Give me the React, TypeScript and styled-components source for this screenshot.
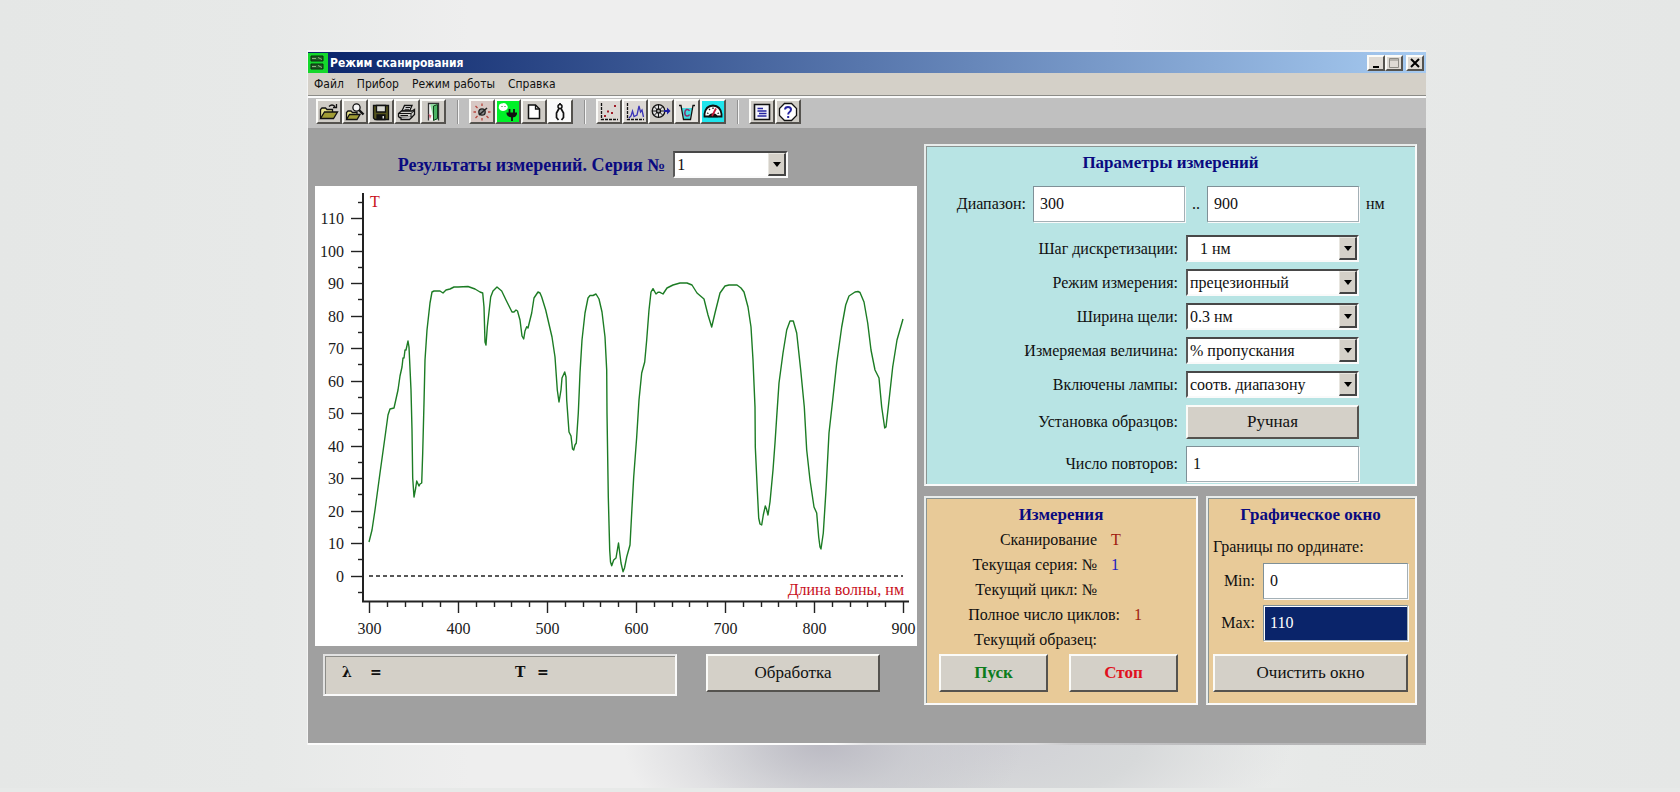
import React from "react";
import styled, { createGlobalStyle, css } from "styled-components";

const GlobalStyle = createGlobalStyle`
  * { box-sizing: border-box; }
  body {
    margin: 0;
    background: #e7e9e8;
    font-family: "Liberation Serif", serif;
    font-size: 16px;
    line-height: 20px;
    color: #101010;
  }
  button, input, select { font: inherit; color: inherit; border-radius: 0; }
`;

const Page = styled.div`
  min-height: 100vh;
  padding: 50px 254px 43px 307px;
  border-bottom: 4px solid #e7e9e8;
  background:
    radial-gradient(ellipse 200px 110px at 49% calc(100% - 46px), #bbbac3 0%, rgba(196, 196, 203, 0.6) 45%, rgba(220, 221, 223, 0) 100%),
    radial-gradient(ellipse 300px 120px at 59% calc(100% - 46px), #d0d0d5 0%, #d7d9da 50%, rgba(224, 226, 226, 0) 100%),
    linear-gradient(90deg, #e5e7e6 0%, #e7e9e8 16%, #eeeeee 28%, #eeeeee 66%, #e7e9e8 78%, #e5e7e6 100%);
`;

const AppWindow = styled.main`
  min-width: 1118px;
  border: solid #f4f4f4;
  border-width: 2px 0 0 1px;
  background: #a0a0a0;
`;

const WindowEdge = styled.div`
  height: 2px;
  background: linear-gradient(90deg, #fcfcfc 47%, #e2e2e4 50%, #dcdcde 65%, #cacacc 68%, #b8b8ba 83%, #b4b4b4 100%);
`;

const TitleBar = styled.header`
  display: flex;
  align-items: center;
  height: 21px;
  padding-right: 2px;
  gap: 2px;
  background: linear-gradient(90deg, #0a246a, #a6caf0);
`;

const Title = styled.h1`
  flex: 1;
  margin: 0;
  font: bold 12px/20px "DejaVu Sans Condensed", "DejaVu Sans", sans-serif;
  color: #fff;
`;

const WindowButtons = styled.div<{ $apart?: boolean }>`
  display: flex;
  margin-left: ${(p) => (p.$apart ? 1 : 0)}px;
`;

const raised = css`
  background: #d4d0c8;
  border: 2px solid;
  border-color: #fbfbf8 #55534f #55534f #fbfbf8;
`;

const CaptionButton = styled.button`
  ${raised}
  width: 18px;
  height: 16px;
  padding: 0;
  display: grid;
  place-items: center;
  background: #dedad4;
`;

const MenuBar = styled.nav`
  display: flex;
  gap: 13px;
  height: 25px;
  padding: 1px 6px 0;
  background: #d4d0c8;
  border-bottom: 2px solid #fafafa;
  box-shadow: inset 0 -1px #8c8c88;
`;

const MenuLink = styled.a`
  font: 12px/20px "DejaVu Sans Condensed", "DejaVu Sans", sans-serif;
  color: #111;
  text-decoration: none;
`;

const Toolbar = styled.div`
  display: flex;
  align-items: center;
  height: 30px;
  padding: 0 8px 3px;
  background: #c0c0c0;
`;

const ToolGroup = styled.div`
  display: flex;
`;

const Separator = styled.span`
  width: 2px;
  height: 24px;
  margin: 0 10px 0 11px;
  background: linear-gradient(90deg, #929292 50%, #f4f4f4 50%);
`;

const ToolButton = styled.button<{ $tint?: string }>`
  ${raised}
  width: 26px;
  height: 25px;
  padding: 0;
  display: grid;
  place-items: center;
  background: ${(p) => p.$tint ?? "#cfccc6"};
  svg { display: block; }
`;

const Workspace = styled.div`
  display: flex;
  gap: 7px;
  padding: 16px 9px 38px 7px;
`;

const ResultsColumn = styled.section`
  flex: 1;
  min-width: 0;
`;

const SidePanels = styled.section`
  width: 493px;
  flex: none;
  display: flex;
  flex-direction: column;
  gap: 10px;
`;

const Heading = styled.h2`
  margin: 0;
  font-size: 17px;
  line-height: 20px;
  font-weight: bold;
  text-align: center;
  color: #0a0a80;
`;

const SeriesRow = styled.div`
  display: flex;
  justify-content: center;
  align-items: center;
  gap: 8px;
  height: 27px;
  margin: 7px 46px 8px 0;
`;

const SeriesLabel = styled.label`
  font-size: 18px;
  font-weight: bold;
  color: #0a0a80;
`;

const SelectBox = styled.span<{ $width: number }>`
  position: relative;
  display: block;
  width: ${(p) => p.$width}px;
  height: 27px;
  border: 2px solid;
  border-color: #484848 #fafafa #fafafa #585858;
  background: #fff;
`;

const NativeSelect = styled.select<{ $indent?: boolean }>`
  appearance: none;
  display: block;
  width: 100%;
  height: 23px;
  border: 0;
  outline: 0;
  padding: 0 20px 0 ${(p) => (p.$indent ? 12 : 2)}px;
  background: transparent;
`;

const ArrowBox = styled.span`
  position: absolute;
  top: 0;
  right: 0;
  width: 18px;
  height: 23px;
  display: grid;
  place-items: center;
  border: solid;
  border-width: 1px 2px 2px 1px;
  border-color: #e8e6e0 #444 #444 #e8e6e0;
  background: #d4d0c8;
  pointer-events: none;
  &::after {
    content: "";
    border: solid transparent;
    border-width: 5px 4px 0;
    border-top-color: #000;
  }
`;

const TextInput = styled.input<{ $selected?: boolean }>`
  width: 100%;
  min-width: 0;
  height: 36px;
  padding: 0 6px;
  border: 1px solid;
  border-color: #7f9097 #a4b0b6 #a4b0b6 #7f9097;
  outline: 0;
  background: ${(p) => (p.$selected ? "#0a246a" : "#fff")};
  color: ${(p) => (p.$selected ? "#fff" : "#101010")};
  box-shadow: ${(p) => (p.$selected ? "inset 1px 1px #fff, " : "")}1px 1px #fafafa;
`;

const ChartSheet = styled.figure`
  margin: 0;
  background: #fff;
  svg { display: block; width: 100%; height: auto; }
`;

const PushButton = styled.button<{ $tone?: string; $width?: number; $low?: boolean }>`
  ${raised}
  width: ${(p) => (p.$width ? p.$width + "px" : "100%")};
  height: ${(p) => (p.$low ? 34 : 38)}px;
  padding: 0;
  color: ${(p) => p.$tone ?? "#101010"};
  font-weight: ${(p) => (p.$tone ? "bold" : "normal")};
  font-size: 17px;
`;

const BottomRow = styled.div`
  display: flex;
  align-items: flex-start;
  gap: 29px;
  padding: 8px 37px 0 8px;
`;

const Readout = styled.output`
  flex: 1;
  height: 42px;
  display: grid;
  grid-template-columns: 28px 145px 22px 1fr;
  align-items: start;
  padding: 6px 17px;
  border: 2px solid;
  border-color: #e2e2e2 #fafafa #fafafa #e2e2e2;
  background: #d4d0c8;
  box-shadow: inset 1px 1px #8c8c88;
  font: bold 14px/20px "DejaVu Serif", "Liberation Serif", serif;
`;

const Panel = styled.section<{ $fill: string }>`
  border: 2px solid;
  border-color: #e8eceb #fafafa #fafafa #e8eceb;
  box-shadow: inset 1px 1px #8a9492;
  background: ${(p) => p.$fill};
`;

const ParametersPanel = styled(Panel)`
  height: 342px;
  padding: 7px;
`;

const RangeRow = styled.div`
  display: grid;
  grid-template-columns: 100px 152px 22px 152px 1fr;
  align-items: center;
  margin-top: 13px;
  > label { text-align: right; padding-right: 7px; }
  > span { padding-left: 7px; }
`;

const Fields = styled.div`
  display: grid;
  grid-template-columns: 245px 173px;
  align-items: center;
  row-gap: 7px;
  column-gap: 8px;
  margin-top: 13px;
  > label { text-align: right; }
`;

const LowerPanels = styled.div`
  display: grid;
  grid-template-columns: 274px 1fr;
  gap: 8px;
`;

const TaskPanel = styled(Panel)`
  height: 209px;
  padding: 7px;
  display: flex;
  flex-direction: column;
`;

const StatusList = styled.dl`
  margin: 2px 0 0;
`;

const StatusRow = styled.div<{ $wide?: boolean }>`
  display: grid;
  grid-template-columns: ${(p) => (p.$wide ? 187 : 164)}px 1fr;
  column-gap: 14px;
  line-height: 25px;
  dt { text-align: right; white-space: nowrap; }
  dd { margin: 0; }
`;

const Value = styled.dd<{ $color: string }>`
  color: ${(p) => p.$color};
`;

const ButtonRow = styled.div`
  display: flex;
  gap: 21px;
  padding: 0 6px;
  margin-top: auto;
  margin-bottom: 4px;
`;

const LimitNote = styled.p`
  margin: 12px 0 6px;
`;

const LimitRow = styled.div`
  display: grid;
  grid-template-columns: 42px 1fr;
  column-gap: 8px;
  align-items: center;
  margin-bottom: 6px;
  label { text-align: right; }
`;

const LimitPanel = styled(TaskPanel)`
  padding: 7px 7px 7px 5px;
`;

const ClearRow = styled(ButtonRow)`
  padding: 0;
`;

/* Transmission spectrum, traced in the sheet's own units */
const SPECTRUM = `369,542 372,530 375,510 380,473 385,437 388,415 390,409 394,408 398,390 400,376 402,367 403,358 404,358 405,350 406,350 408,341 409,347 411,390 412,430
412.7,478 414,497 415.7,488 416.7,481 419,486 420,484 421.7,483 422.7,453 424,403 425,360 427,330 430,303 432,292 434,291 440,291 443,293 446,290 450,289 454,287 458,287 468,286.5 475,289 480,292 482.7,293
484,307 485,342 486,345 487.3,327 490.7,297 493,291 497,287 501.7,291 506,300 512,312 514,312 516,310 517.5,311 520,320 522,336 523.7,339 525,331 526.7,326.7 528,328 531.7,313 534,298 538,292
540,293 541.7,297 545.7,310 552,337 555,357 557.3,390 559,402 561,390 562,378 564.7,372 566,377 566.7,400 569,432 571,436 572.5,449 573.7,450 575,445 576.3,443 578.3,413 579.3,390 580,373 582,340 585,313
588,298 590,295.5 593,295.5 596,294 599,299 602,312 605,337 606.7,370 607,413 608.3,497 609.7,550 610.5,562 611.7,565.7 613.7,560 616,558 618.5,543 621,563 623,571.7 624.5,568 626.7,557 630,545 631.7,513 633.7,477 636.7,437
639,400 641.7,373 644.7,362 646.7,340 649,310 651,292 653,288.7 656,294 658,292.3 660,292.3 663,294 667,288 673,285 680,283 687,283 692,285 697,293 704,299 708,315 711.7,327 715,313 720,293 725,286 729,285
737,285 741,288 744,292 748,307 751,327 753,360 755,407 755.3,447 757.3,490 758.7,518 760,524 761.7,525 763.3,515 765.3,506 766.5,509 768,515 770,502 773,470 775,443 776.7,417 779,383 783,353 786.7,330 790,321 793.3,321
796.7,333 800.7,370 804.3,407 806.7,450 810,480 814,507 816.7,513 818.7,537 820,547 821,549 823.3,533 826,490 829,433 832.7,400 836.7,363 841.7,327 845.7,305 849,296 855,292 858,291.5 860,292.5 864,302 867.7,323 871,350 875,370
879,378 881.7,407 884.7,428 886,427 888.3,407 892.7,367 897,340 903,319`;

const yOf = (t: number) => Math.floor(576 - t * 3.248) + 0.5;
const xOf = (nm: number) => Math.round(369 + (nm - 300) * 0.89) + 0.5;
const percents = Array.from({ length: 12 }, (_, i) => i * 10);
const halfPercents = Array.from({ length: 13 }, (_, i) => i * 10 - 5);
const wavelengths = Array.from({ length: 31 }, (_, i) => 300 + i * 20);

function SpectrumChart() {
  return (
    <svg viewBox="315 186 602 460" role="img" aria-label="Спектр пропускания" fontFamily="'Liberation Serif', serif" fontSize="16">
      <g stroke="#222" strokeWidth="2" fill="none">
        <path d="M363 193V602" />
        <path d="M362 601.5H909" />
      </g>
      <g stroke="#222" strokeWidth="1.4">
        {percents.map((t) => <path key={t} d={`M351 ${yOf(t)}H363`} />)}
        {halfPercents.map((t) => <path key={t} d={`M358 ${yOf(t)}H363`} />)}
        {wavelengths.map((w) => <path key={w} d={`M${xOf(w)} 602V${w % 100 === 0 ? 613 : 607}`} />)}
      </g>
      <path d="M369 576H903" stroke="#222" strokeWidth="1.4" strokeDasharray="4 3" />
      <g fill="#1a1a1a" textAnchor="end">
        {percents.map((t) => <text key={t} x="344" y={yOf(t) + 5}>{t}</text>)}
      </g>
      <g fill="#1a1a1a" textAnchor="middle">
        {[300, 400, 500, 600, 700, 800, 900].map((w) => <text key={w} x={xOf(w)} y="634">{w}</text>)}
      </g>
      <text x="370" y="207" fill="#c8101c">T</text>
      <text x="904" y="595" fill="#c8101c" textAnchor="end">Длина волны, нм</text>
      <polyline points={SPECTRUM} fill="none" stroke="#1c7c24" strokeWidth="1.4" strokeLinejoin="round" />
    </svg>
  );
}

const Glyph = ({ children, size = 20 }: { children: React.ReactNode; size?: number }) => (
  <svg width={size} height={size} viewBox="0 0 20 20" fill="none" stroke="#111" strokeWidth="1.3" aria-hidden="true">{children}</svg>
);

const OpenGlyph = () => (
  <Glyph>
    <path d="M1.5 16V7.5L3 6H6.5L8 7.5H13.5V10" fill="#e8e48c" />
    <path d="M1.5 16.5L5.5 10H18.5L14.5 16.5Z" fill="#a09c34" />
    <path d="M10 4.5Q13 1.5 16 4.5M17.5 2V5.5H14" />
  </Glyph>
);
const BrowseGlyph = () => (
  <Glyph>
    <path d="M1.5 17V10.5L3 9H6L7.5 10.5H12V12" fill="#e8e48c" />
    <path d="M1.5 17.5L4.5 12.5H15L12 17.5Z" fill="#a09c34" />
    <circle cx="11.5" cy="5.5" r="3.6" fill="#f4f4f4" />
    <path d="M14 8L18.5 12.5" strokeWidth="2.4" />
  </Glyph>
);
const SaveGlyph = () => (
  <Glyph>
    <path d="M2.5 3.5H17.5V17.5H4L2.5 16Z" fill="#55531c" />
    <path d="M5.5 3.5H14.5V10H5.5Z" fill="#d8d8d2" />
    <path d="M6 13H14V17.5H6Z" fill="#111" />
    <path d="M11.5 14H13V16.5H11.5Z" fill="#ddd" stroke="none" />
  </Glyph>
);
const PrintGlyph = () => (
  <Glyph>
    <path d="M5 9L7.500 3.500H15L12.500 9Z" fill="#f4f4f4" />
    <path d="M8.500 5.500H13M7.500 7.300H12" strokeWidth="1" />
    <path d="M1.500 11.500L4.500 9H15L17.500 7.500V12.500L14.500 15.500H2.500L1.500 14.500Z" fill="#d0d0cc" />
    <path d="M1.500 11.500H14L17.500 8.500M14 11.500V15.500M3.500 13.500H11" strokeWidth="1" />
    <path d="M4 15.500V17.500H12.500L15 15" fill="#ddd" />
  </Glyph>
);
const ExitGlyph = () => (
  <Glyph>
    <path d="M5.500 18.500V1.500H15.500V18.500" fill="#f7f7f7" stroke="#333" />
    <path d="M7.500 2H15V18H11L7.500 4Z" fill="#8cd89c" stroke="none" />
    <path d="M10.500 4L14.500 2.500V16.500L10.500 18.500Z" fill="#4cb464" stroke="#123c1a" strokeWidth="1" />
    <path d="M5.500 12L8.500 13.500L7 17Z" fill="#d86478" stroke="none" />
  </Glyph>
);
const LampGlyph = () => (
  <Glyph>
    <circle cx="10" cy="10" r="3.2" fill="#8a8a8a" stroke="#222" />
    <path d="M7 13L15 6" stroke="#222" strokeWidth="1.5" />
    <path d="M10 1.5V4M10 16V18.5M1.5 10H4M16 10H18.5M3.5 4L5.5 6M14.5 14L16.5 16M3.5 16L5.5 14" stroke="#b8443c" />
  </Glyph>
);
const PowerGlyph = () => (
  <Glyph>
    <path d="M0 0H20V20H0Z" fill="#00f028" stroke="none" />
    <path d="M1 4Q1 1 4 1.5Q7 0 9 3Q11 6 8 8Q5 10 2 8Q0 6 1 4Z" fill="#fff" stroke="none" />
    <path d="M4 4V5M7 4V5" stroke="#5a8a5a" />
    <path d="M8.5 10.500H19V12Q18 15.500 14 15.500Q9.500 15.500 8.500 12Z" fill="#111" stroke="none" />
    <path d="M11.500 11V7M16 11V7M14 15V19" strokeWidth="1.8" />
  </Glyph>
);
const PageGlyph = () => (
  <Glyph><path d="M4.500 3H11.500L15.500 7V16.500H4.500Z" fill="#fff" strokeWidth="1.5" /><path d="M11.500 3V7H15.500" /></Glyph>
);
const DividerGlyph = () => (
  <Glyph>
    <circle cx="10" cy="4.500" r="2" strokeWidth="1.5" />
    <path d="M10 1V3M9 6.500L6.500 11V15.500L8.500 18M11 6.500L13.500 11V15.500L11.500 18" strokeWidth="1.7" />
  </Glyph>
);
const ScatterGlyph = () => (
  <Glyph>
    <path d="M2.500 1V17.500H19" strokeDasharray="3 1" />
    <g fill="#a01c28" stroke="none"><path d="M5 13h2v2h-2zM8 8.500h2v2h-2zM12 10h2v2h-2zM15 3h2v2h-2z" /></g>
  </Glyph>
);
const PeaksGlyph = () => (
  <Glyph>
    <path d="M2.500 1V17.500H19" strokeDasharray="3 1" />
    <path d="M4 16L6 14L7.500 9L9 14.500L12 13L14 4L15.500 10L17 8L18.500 15" stroke="#3a34b8" />
  </Glyph>
);
const WheelGlyph = () => (
  <Glyph>
    <circle cx="7.500" cy="9" r="6.300" fill="#e0e0e0" />
    <path d="M7.500 2.500V15.500M1 9H14M3.500 5L11.500 13M11.500 5L3.500 13" strokeWidth="1" />
    <circle cx="7.500" cy="9" r="2" fill="#aaa" />
    <path d="M13 9H17.500" stroke="#1c1ca0" strokeWidth="2" />
    <path d="M16 5.500L19.500 9L16 12.500Z" fill="#1c1ca0" stroke="none" />
  </Glyph>
);
const BeakerGlyph = () => (
  <Glyph>
    <path d="M4.800 6H15.200L13 17H7Z" fill="#40dce0" stroke="none" />
    <path d="M2 3.500H4L6.500 17.500H13.500L16 3.500H18" />
    <path d="M12.500 9Q11.500 7 9.500 7.500Q7.800 8.500 7.800 11Q8 14 10 14Q12 14 12.500 12.500" stroke="#8c2c6c" strokeWidth="1.500" />
  </Glyph>
);
const GaugeGlyph = () => (
  <Glyph>
    <path d="M0 0H20V20H0Z" fill="#20e4ec" stroke="none" />
    <path d="M1.500 14.500V12Q2.500 4 10 3.500Q17.500 4 18.500 12V14.500Z" fill="#fff" strokeWidth="1.800" />
    <path d="M4 11L5.500 11.500M6 7L7 8M10 5.500V7M16 11L14.500 11.500" />
    <path d="M6 14.500Q7 12 10 12Q13 12 14 14.500Z" fill="#111" />
    <path d="M9 14L13 6.500" stroke="#c81c3c" strokeWidth="1.800" />
  </Glyph>
);
const ReportGlyph = () => (
  <Glyph>
    <path d="M2.500 2.500H17.500V17.500H2.500Z" fill="#f4f4fa" strokeWidth="1.600" />
    <path d="M5.500 6.500H11M5.500 9H14.500M7 11.500H14.500M5.500 14H14.500" stroke="#2424a0" strokeWidth="1.300" />
  </Glyph>
);
const HelpGlyph = () => (
  <Glyph>
    <path d="M6.500 1.500H13.500L18.500 6.500V13.500L13.500 18.500H6.500L1.500 13.500V6.500Z" fill="#fff" />
    <path d="M7 7.500Q7.200 5 10 5Q13 5 13 7.500Q13 9 11.500 10Q10.200 10.800 10.200 12.500M10.200 14V16" stroke="#2424a0" strokeWidth="2" />
  </Glyph>
);
const AppGlyph = () => (
  <svg width="20" height="20" viewBox="0 0 20 20" aria-hidden="true">
    <path d="M0 0H20V20H0Z" fill="#14d82c" />
    <path d="M3 3H15V8H3ZM3 11H15V16H3Z" fill="#1e5c24" stroke="#0b2a0e" />
    <path d="M4 5.500H8M10 4.500L14 6.500M4 13.500H8M10 12.500L14 14.500" stroke="#96b088" />
  </svg>
);

type Tool = { name: string; icon: () => React.ReactElement; tint?: string };
const toolGroups: Tool[][] = [
  [
    { name: "Открыть", icon: OpenGlyph },
    { name: "Просмотр файлов", icon: BrowseGlyph },
    { name: "Сохранить", icon: SaveGlyph },
    { name: "Печать", icon: PrintGlyph },
    { name: "Выход", icon: ExitGlyph },
  ],
  [
    { name: "Лампы", icon: LampGlyph, tint: "#d8c8c4" },
    { name: "Подключение", icon: PowerGlyph, tint: "#00f028" },
    { name: "Новый", icon: PageGlyph },
    { name: "Калибровка", icon: DividerGlyph, tint: "#fafafa" },
  ],
  [
    { name: "Точки", icon: ScatterGlyph, tint: "#dcd8d4" },
    { name: "Спектр", icon: PeaksGlyph, tint: "#dcd8d4" },
    { name: "Кюветы", icon: WheelGlyph },
    { name: "Концентрация", icon: BeakerGlyph, tint: "#e4e2de" },
    { name: "Фотометрия", icon: GaugeGlyph, tint: "#20e4ec" },
  ],
  [
    { name: "Отчёт", icon: ReportGlyph },
    { name: "Помощь", icon: HelpGlyph },
  ],
];

const parameterSelects = [
  { id: "step", label: "Шаг дискретизации:", value: "1 нм", indent: true },
  { id: "mode", label: "Режим измерения:", value: "прецезионный" },
  { id: "slit", label: "Ширина щели:", value: "0.3 нм" },
  { id: "quantity", label: "Измеряемая величина:", value: "% пропускания" },
  { id: "lamps", label: "Включены лампы:", value: "соотв. диапазону" },
];

const statusRows = [
  { label: "Сканирование", value: "T", color: "#a02010" },
  { label: "Текущая серия: №", value: "1", color: "#2018c0" },
  { label: "Текущий цикл: №", value: "", color: "#101010" },
  { label: "Полное число циклов:", value: "1", color: "#a02010", wide: true },
  { label: "Текущий образец:", value: "", color: "#101010" },
];

function Dropdown({ id, value, width, indent }: { id: string; value: string; width: number; indent?: boolean }) {
  return (
    <SelectBox $width={width}>
      <NativeSelect id={id} $indent={indent} defaultValue={value}>
        <option>{value}</option>
      </NativeSelect>
      <ArrowBox />
    </SelectBox>
  );
}

export default function App() {
  return (
    <>
      <GlobalStyle />
      <Page>
        <AppWindow>
          <TitleBar>
            <AppGlyph />
            <Title>Режим сканирования</Title>
            <WindowButtons>
              <CaptionButton aria-label="Свернуть">
                <svg width="12" height="12"><path d="M3 9H9V11H3Z" fill="#000" /></svg>
              </CaptionButton>
              <CaptionButton aria-label="Развернуть">
                <svg width="12" height="12"><path d="M1.500 1.500H10.500V10.500H1.500ZM1 3H11" fill="none" stroke="#8c8a84" /></svg>
              </CaptionButton>
            </WindowButtons>
            <WindowButtons $apart>
              <CaptionButton aria-label="Закрыть">
                <svg width="12" height="12"><path d="M2 2L10 10M10 2L2 10" stroke="#000" strokeWidth="2" /></svg>
              </CaptionButton>
            </WindowButtons>
          </TitleBar>
          <MenuBar>
            {["Файл", "Прибор", "Режим работы", "Справка"].map((m) => <MenuLink key={m} href="#">{m}</MenuLink>)}
          </MenuBar>
          <Toolbar>
            {toolGroups.map((group, i) => (
              <React.Fragment key={i}>
                {i > 0 && <Separator />}
                <ToolGroup>
                  {group.map(({ name, icon: Icon, tint }) => (
                    <ToolButton key={name} aria-label={name} $tint={tint}><Icon /></ToolButton>
                  ))}
                </ToolGroup>
              </React.Fragment>
            ))}
          </Toolbar>
          <Workspace>
            <ResultsColumn>
              <SeriesRow>
                <SeriesLabel htmlFor="series">Результаты измерений. Серия №</SeriesLabel>
                <Dropdown id="series" value="1" width={115} />
              </SeriesRow>
              <ChartSheet><SpectrumChart /></ChartSheet>
              <BottomRow>
                <Readout>
                  <span>λ</span><span>=</span><span>T</span><span>=</span>
                </Readout>
                <PushButton $width={174}>Обработка</PushButton>
              </BottomRow>
            </ResultsColumn>
            <SidePanels>
              <ParametersPanel $fill="#b8e4e4">
                <Heading>Параметры измерений</Heading>
                <RangeRow>
                  <label htmlFor="from">Диапазон:</label>
                  <TextInput id="from" defaultValue="300" />
                  <span>..</span>
                  <TextInput aria-label="Конец диапазона" defaultValue="900" />
                  <span>нм</span>
                </RangeRow>
                <Fields>
                  {parameterSelects.map((f) => (
                    <React.Fragment key={f.id}>
                      <label htmlFor={f.id}>{f.label}</label>
                      <Dropdown id={f.id} value={f.value} width={173} indent={f.indent} />
                    </React.Fragment>
                  ))}
                  <label htmlFor="samples">Установка образцов:</label>
                  <PushButton id="samples" $low>Ручная</PushButton>
                  <label htmlFor="repeats">Число повторов:</label>
                  <TextInput id="repeats" defaultValue="1" />
                </Fields>
              </ParametersPanel>
              <LowerPanels>
                <TaskPanel $fill="#e8ca98">
                  <Heading>Измерения</Heading>
                  <StatusList>
                    {statusRows.map((r) => (
                      <StatusRow key={r.label} $wide={r.wide}>
                        <dt>{r.label}</dt>
                        <Value $color={r.color}>{r.value}</Value>
                      </StatusRow>
                    ))}
                  </StatusList>
                  <ButtonRow>
                    <PushButton $width={109} $tone="#0c7c1c">Пуск</PushButton>
                    <PushButton $width={109} $tone="#e01020">Стоп</PushButton>
                  </ButtonRow>
                </TaskPanel>
                <LimitPanel $fill="#e8ca98">
                  <Heading>Графическое окно</Heading>
                  <LimitNote>Границы по ординате:</LimitNote>
                  <LimitRow>
                    <label htmlFor="min">Min:</label>
                    <TextInput id="min" defaultValue="0" />
                  </LimitRow>
                  <LimitRow>
                    <label htmlFor="max">Max:</label>
                    <TextInput id="max" defaultValue="110" $selected />
                  </LimitRow>
                  <ClearRow><PushButton>Очистить окно</PushButton></ClearRow>
                </LimitPanel>
              </LowerPanels>
            </SidePanels>
          </Workspace>
          <WindowEdge />
        </AppWindow>
      </Page>
    </>
  );
}
